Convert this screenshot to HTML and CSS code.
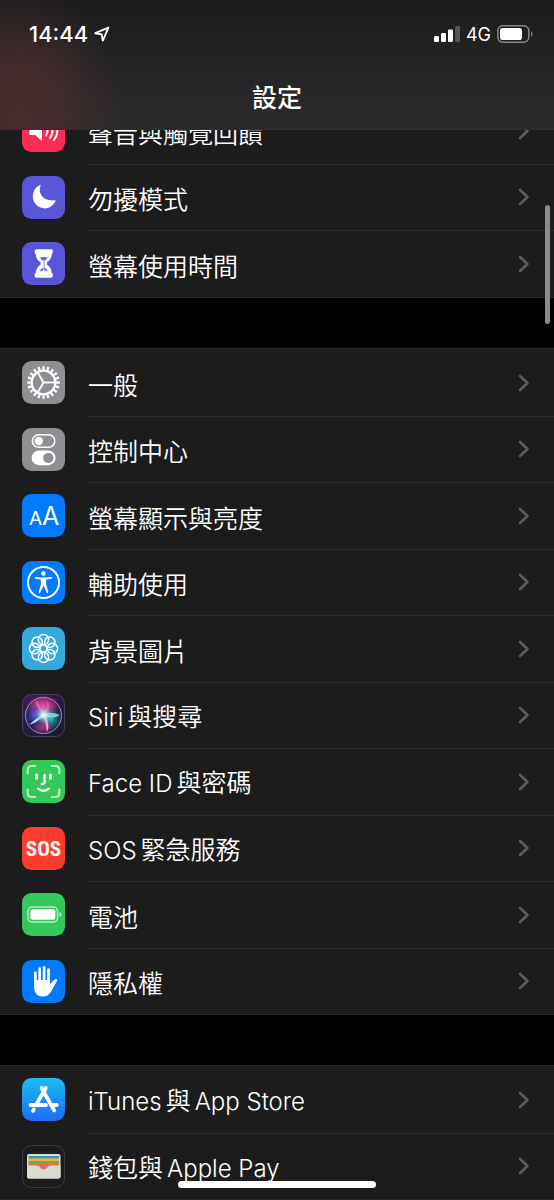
FILE: index.html
```html
<!DOCTYPE html>
<html lang="zh-Hant">
<head>
<meta charset="utf-8">
<meta name="viewport" content="width=device-width, initial-scale=1">
<title>設定</title>
<link rel="stylesheet" href="styles.css">
</head>
<body>
<svg class="defs" aria-hidden="true">
  <defs>
    <symbol id="chevron" viewBox="0 0 12 18"><path d="M2 2 L9.5 9 L2 16" fill="none" stroke="currentColor" stroke-width="2.6" stroke-linecap="round" stroke-linejoin="round"/></symbol>
    <linearGradient id="store" x1="0" y1="0" x2="0" y2="1"><stop offset="0" stop-color="#1cbcf7"/><stop offset="1" stop-color="#1d6bf3"/></linearGradient>
    <linearGradient id="siri-bg" x1="0" y1="0" x2="1" y2="1"><stop offset="0" stop-color="#3a1a5c"/><stop offset="1" stop-color="#17182c"/></linearGradient>
    <radialGradient id="siri-glow"><stop offset="0" stop-color="#fff"/><stop offset=".3" stop-color="#c9f4ff" stop-opacity=".8"/><stop offset="1" stop-color="#5ad" stop-opacity="0"/></radialGradient>
    <radialGradient id="siri-pink"><stop offset="0" stop-color="#f0489c"/><stop offset=".5" stop-color="#d8388f" stop-opacity=".8"/><stop offset="1" stop-color="#c02a86" stop-opacity="0"/></radialGradient>
    <radialGradient id="siri-teal"><stop offset="0" stop-color="#24c4b4"/><stop offset="1" stop-color="#12787c" stop-opacity="0"/></radialGradient>
    <radialGradient id="siri-blue"><stop offset="0" stop-color="#5a55e0"/><stop offset="1" stop-color="#3030a0" stop-opacity="0"/></radialGradient>
  </defs>
</svg>

<header class="topbar">
  <div class="status">
    <div class="status-side">
      <time class="clock">14:44</time>
      <svg class="locate" viewBox="0 0 16 16" role="img" aria-label="定位"><path d="M1.3 7.2 L14.4 1.6 L8.8 14.6 L7.7 8.4 Z" fill="none" stroke="#fff" stroke-width="1.9" stroke-linejoin="round"/></svg>
    </div>
    <div class="status-side">
      <svg class="signal" viewBox="0 0 26 17" role="img" aria-label="訊號"><g fill="#fff"><rect x="0" y="10" width="5" height="6" rx="1.3"/><rect x="7" y="7" width="5" height="9" rx="1.3"/><rect x="14" y="3.500" width="5" height="12.500" rx="1.3"/></g><rect x="21" y="0" width="5" height="16" rx="1.3" fill="#555557"/></svg>
      <span class="network">4G</span>
      <svg class="battery" viewBox="0 0 36 18" role="img" aria-label="電池"><rect x=".8" y=".8" width="31" height="16.400" rx="5" fill="none" stroke="#858587" stroke-width="1.5"/><rect x="3" y="3" width="22" height="12" rx="2.800" fill="#fff"/><path d="M34 6.300 a3.200 3.200 0 0 1 0 5.400z" fill="#858587"/></svg>
    </div>
  </div>
  <h1 class="title">設定</h1>
</header>

<main class="settings">
  <ul class="group">
    <li class="row"><a href="#sound">
      <svg class="icon" viewBox="0 0 43 43"><rect width="43" height="43" rx="9.500" fill="#ff2d55"/><path d="M7.500 18 h5.500 l6-6 q1-.8 1 .6 v18 q0 1.400-1 .6 l-6-5.200 h-5.500z" fill="#fff"/><g fill="none" stroke="#fff" stroke-width="1.900" stroke-linecap="round"><path d="M24 17 q3 4.500 0 9.500"/><path d="M28 14 q5 7.500 0 15"/><path d="M32 11.500 q7 10 0 19.500"/></g></svg>
      <span class="label">聲音與觸覺回饋</span><svg class="chevron"><use href="#chevron"/></svg></a></li>
    <li class="row"><a href="#dnd">
      <svg class="icon" viewBox="0 0 43 43"><rect width="43" height="43" rx="9.500" fill="#5856d6"/><path d="M18.500 9.400 C16 16 20 25.500 32.500 24.300 Q34.200 24 33.400 25.500 C29.500 32.800 21 34.500 15 29.600 C8.500 24 9.800 13 17.400 9.200 Q19 8.400 18.500 9.400z" fill="#fff"/></svg>
      <span class="label">勿擾模式</span><svg class="chevron"><use href="#chevron"/></svg></a></li>
    <li class="row"><a href="#screentime">
      <svg class="icon" viewBox="0 0 43 43"><rect width="43" height="43" rx="9.500" fill="#5856d6"/><path d="M14.500 7.300 h14.500 q1.800 0 1.800 1.800 v1.200 q0 1.500-1 1.700 q-.3 5.500-4.800 8.300 v2.400 q4.500 2.800 4.800 8.300 q1 .2 1 1.700 v1.200 q0 1.800-1.800 1.800 h-14.500 q-1.800 0-1.800-1.800 v-1.200 q0-1.500 1-1.700 q.3-5.500 4.800-8.300 v-2.400 q-4.500-2.800-4.800-8.300 q-1-.2-1-1.700 v-1.200 q0-1.800 1.800-1.800z" fill="#fff"/><path d="M18 15.300 h7.600 q-1.200 2.500-3 3.700 v6.500 q2.400 1.800 3.200 4 l-4-1.200 l-4 1.200 q.8-2.200 3.200-4 v-6.500 q-1.800-1.200-3-3.700z" fill="#5856d6"/><path d="M21.800 17.500 v13" stroke="#fff" stroke-width="1"/></svg>
      <span class="label">螢幕使用時間</span><svg class="chevron"><use href="#chevron"/></svg></a></li>
  </ul>

  <ul class="group">
    <li class="row"><a href="#general">
      <svg class="icon" viewBox="0 0 43 43"><rect width="43" height="43" rx="9.500" fill="#8e8e93"/><g fill="none" stroke="#fff"><circle cx="21.500" cy="21.500" r="14.400" stroke-width="3.800" pathLength="80" stroke-dasharray="2 2" stroke-dashoffset="1"/><circle cx="21.500" cy="21.500" r="11.800" stroke-width="2.300"/><g stroke-width="1.900"><path d="M21.500 21.500 H33"/><path d="M21.500 21.500 L15.700 11.500"/><path d="M21.500 21.500 L15.700 31.500"/></g></g></svg>
      <span class="label">一般</span><svg class="chevron"><use href="#chevron"/></svg></a></li>
    <li class="row"><a href="#control">
      <svg class="icon" viewBox="0 0 43 43"><rect width="43" height="43" rx="9.500" fill="#8e8e93"/><rect x="10.400" y="6.700" width="22.400" height="12.600" rx="6.300" fill="none" stroke="#fff" stroke-width="1.600"/><circle cx="16.800" cy="13" r="4.200" fill="#fff"/><rect x="9.600" y="22.600" width="24" height="14.600" rx="7.300" fill="#fff"/><circle cx="26.300" cy="29.900" r="5.200" fill="#8e8e93"/></svg>
      <span class="label">控制中心</span><svg class="chevron"><use href="#chevron"/></svg></a></li>
    <li class="row"><a href="#display">
      <svg class="icon" viewBox="0 0 43 43"><rect width="43" height="43" rx="9.500" fill="#007aff"/><g fill="#fff" class="letters"><text x="7" y="31" font-size="19">A</text><text x="20" y="31" font-size="25">A</text></g></svg>
      <span class="label">螢幕顯示與亮度</span><svg class="chevron"><use href="#chevron"/></svg></a></li>
    <li class="row"><a href="#accessibility">
      <svg class="icon" viewBox="0 0 43 43"><rect width="43" height="43" rx="9.500" fill="#007aff"/><circle cx="21.500" cy="21.500" r="15.500" fill="none" stroke="#fff" stroke-width="1.900"/><circle cx="21.500" cy="12.500" r="2.300" fill="#fff"/><path d="M13.600 16.900 L19 17.500 H24 L29.400 16.900" fill="none" stroke="#fff" stroke-width="1.900" stroke-linecap="round"/><path d="M18.800 17 h5.400 v6.500 l2.100 7.600 q.1 1.300-1.300 1 l-3.500-7.600 l-3.500 7.600 q-1.400.3-1.300-1 l2.100-7.600z" fill="#fff"/></svg>
      <span class="label">輔助使用</span><svg class="chevron"><use href="#chevron"/></svg></a></li>
    <li class="row"><a href="#wallpaper">
      <svg class="icon" viewBox="0 0 43 43"><rect width="43" height="43" rx="9.500" fill="#34aadc"/><g fill="none" stroke="#fff" stroke-width="1.500"><circle cx="21.500" cy="12.600" r="5.200"/><circle cx="27.800" cy="15.200" r="5.200"/><circle cx="30.400" cy="21.500" r="5.200"/><circle cx="27.800" cy="27.800" r="5.200"/><circle cx="21.500" cy="30.400" r="5.200"/><circle cx="15.200" cy="27.800" r="5.200"/><circle cx="12.600" cy="21.500" r="5.200"/><circle cx="15.200" cy="15.200" r="5.200"/><circle cx="21.500" cy="21.500" r="3.500"/></g></svg>
      <span class="label">背景圖片</span><svg class="chevron"><use href="#chevron"/></svg></a></li>
    <li class="row"><a href="#siri">
      <svg class="icon" viewBox="0 0 43 43"><rect x=".5" y=".5" width="42" height="42" rx="9" fill="url(#siri-bg)" stroke="#46405c"/><circle cx="21.500" cy="21.500" r="18" fill="#1d2148"/><ellipse cx="21" cy="12" rx="17" ry="11" fill="url(#siri-pink)"/><ellipse cx="29" cy="25" rx="11" ry="12" fill="url(#siri-teal)"/><ellipse cx="12" cy="21" rx="10" ry="13" fill="url(#siri-blue)"/><ellipse cx="21" cy="33" rx="11" ry="7" fill="url(#siri-pink)" opacity=".6"/><path d="M22 20 Q12 12 14 6 Q19 14 22 20 Q27 12 25 6 Q30 14 22 20z" fill="#f9a" opacity=".5"/><path d="M22 20 Q14 24 7 31 Q17 28 22 20z" fill="#9ff4ff"/><path d="M21 21 Q24 30 25 38 Q29 29 22 20z" fill="#f3a4d6"/><path d="M21 20 Q29 17 38 21 Q31 26 21 22z" fill="#9ff3e6" opacity=".75"/><circle cx="21.500" cy="21" r="10" fill="url(#siri-glow)"/><circle cx="21.500" cy="21.500" r="18" fill="none" stroke="#a092b8" stroke-width="1"/></svg>
      <span class="label"><span class="lead">Siri</span>與搜尋</span><svg class="chevron"><use href="#chevron"/></svg></a></li>
    <li class="row"><a href="#faceid">
      <svg class="icon" viewBox="0 0 43 43"><rect width="43" height="43" rx="9.500" fill="#34c759"/><g fill="none" stroke-linecap="round"><path d="M5.700 13.500 V10 Q5.700 6 9.700 6 H13.200 M29.800 6 H33.300 Q37.300 6 37.300 10 V13.500 M37.300 29.500 V33 Q37.300 37 33.300 37 H29.800 M13.200 37 H9.700 Q5.700 37 5.700 33 V29.500" stroke="#b5f0bf" stroke-width="2.200"/><path d="M14.500 15 V18.300 M28.500 15 V18.300" stroke="#fff" stroke-width="3"/><path d="M22.600 15 V22 Q22.600 24.200 19.800 24 M16 28.700 Q21.500 33 27 28.700" stroke="#fff" stroke-width="2.300"/></g></svg>
      <span class="label"><span class="lead">Face ID</span>與密碼</span><svg class="chevron"><use href="#chevron"/></svg></a></li>
    <li class="row"><a href="#sos">
      <svg class="icon" viewBox="0 0 43 43"><rect width="43" height="43" rx="9.500" fill="#ff3b30"/><text class="sos" x="21.500" y="29" text-anchor="middle" fill="#fff">SOS</text></svg>
      <span class="label"><span class="lead">SOS</span>緊急服務</span><svg class="chevron"><use href="#chevron"/></svg></a></li>
    <li class="row"><a href="#battery">
      <svg class="icon" viewBox="0 0 43 43"><rect width="43" height="43" rx="9.500" fill="#34c759"/><rect x="6" y="14" width="29.500" height="15" rx="4" fill="none" stroke="#b5f0bf" stroke-width="1.500"/><rect x="8.300" y="16.300" width="25" height="10.400" rx="2" fill="#fff"/><path d="M37.400 19 q2 .8 2 2.500 t-2 2.500z" fill="#b5f0bf"/></svg>
      <span class="label">電池</span><svg class="chevron"><use href="#chevron"/></svg></a></li>
    <li class="row"><a href="#privacy">
      <svg class="icon" viewBox="0 0 43 43"><rect width="43" height="43" rx="9.500" fill="#007aff"/><g stroke="#fff" stroke-width="2.700" stroke-linecap="round" fill="none"><path d="M13.400 26 V12.800"/><path d="M17.700 22 V8.500"/><path d="M22.100 22 V7.300"/><path d="M26.500 23 V9.500"/></g><path d="M12 20 H27.900 V24.500 L31 20.800 Q32.600 18.800 34.600 19.300 Q35.800 19.800 34.800 21.200 L29.500 31 Q26.500 36.600 20.800 36.600 Q12 36.600 12 27z" fill="#fff"/></svg>
      <span class="label">隱私權</span><svg class="chevron"><use href="#chevron"/></svg></a></li>
  </ul>

  <ul class="group">
    <li class="row"><a href="#store-settings">
      <svg class="icon" viewBox="0 0 43 43"><rect width="43" height="43" rx="9.500" fill="url(#store)"/><g fill="none" stroke="#fff" stroke-width="3.800" stroke-linecap="round"><path d="M23.800 10 L14.200 26.600"/><path d="M19.600 10 L32.200 32.400"/><path d="M8.600 27 H24"/><path d="M31 27 H34.800"/><path d="M11.800 31.400 L11 32.800"/></g></svg>
      <span class="label"><span class="lead">iTunes</span>與<span class="trail">App Store</span></span><svg class="chevron"><use href="#chevron"/></svg></a></li>
    <li class="row"><a href="#wallet">
      <svg class="icon" viewBox="0 0 43 43"><rect x=".5" y=".5" width="42" height="42" rx="9" fill="#1c1c1d" stroke="#3c3c3e"/><rect x="5" y="9" width="33.500" height="24.500" rx="2" fill="#dddbd0"/><rect x="6.500" y="11" width="30.500" height="3" fill="#3f95bd"/><rect x="6.500" y="13.400" width="30.500" height="3" fill="#eab73a"/><rect x="6.500" y="16" width="30.500" height="3" fill="#6cab50"/><rect x="6.500" y="18.500" width="30.500" height="3" fill="#ee6a5a"/><path d="M5 20.500 H14.500 Q16.500 20.500 17.500 22 Q21.700 27.500 26 22 Q27 20.500 29 20.500 H38.500 V31.500 Q38.500 33.500 36.500 33.500 H7 Q5 33.500 5 31.500z" fill="#dddbd0"/><path d="M15.500 20.300 Q17 20.500 17.800 22 Q21.700 27.200 25.700 22 Q26.500 20.500 28 20.300z" fill="#ee6a5a"/></svg>
      <span class="label">錢包與<span class="trail">Apple Pay</span></span><svg class="chevron"><use href="#chevron"/></svg></a></li>
  </ul>
</main>

<div class="scroll-thumb"></div>
<div class="home-bar"></div>
</body>
</html>
```

FILE: styles.css
```css
* {
  box-sizing: border-box;
}

body {
  margin: 0;
  min-height: 100vh;
  background: #000;
  color: #fff;
  font-family: Inter, "Noto Sans CJK TC", sans-serif;
}

.defs {
  position: absolute;
  width: 0;
  height: 0;
}

.topbar {
  position: fixed;
  z-index: 2;
  top: 0;
  left: 0;
  right: 0;
  padding: 20px 21px 15px 29px;
  border-bottom: 1px solid #303032;
  background:
    radial-gradient(ellipse 100px 130px at 20px 115px, #482b2c 0%, #482b2cd0 40%, #482b2c50 75%, #482b2c00 100%),
    linear-gradient(#1c1c1c, #29292b 85%);
}

.status,
.status-side {
  display: flex;
  align-items: center;
}

.status {
  justify-content: space-between;
  height: 28px;
}

.status-side {
  gap: 6px;
}

.clock {
  font-size: 22px;
  font-weight: 500;
}

.locate {
  width: 16px;
  height: 16px;
}

.signal {
  width: 26px;
  height: 17px;
}

.network {
  font-size: 18px;
}

.battery {
  width: 36px;
  height: 18px;
}

.title {
  margin: 31px 8px 0 0;
  font-family: "Noto Sans CJK TC", sans-serif;
  font-size: 25px;
  font-weight: 500;
  line-height: 35px;
  text-align: center;
}

.settings {
  display: grid;
  gap: 52px;
  padding-top: 97px;
}

.group {
  margin: 0;
  padding: 0;
  list-style: none;
  background: #1c1c1d;
  box-shadow: 0 -1px #29292a, 0 1px #29292a;
}

.row a {
  display: flex;
  align-items: center;
  height: 66px;
  padding: 0 24px 0 22px;
  color: inherit;
  text-decoration: none;
}

.row:nth-child(odd) a {
  height: 67px;
}

.row + .row {
  background: linear-gradient(#2e2e30, #2e2e30) 88px 0 / 100% 1px no-repeat;
}

.icon {
  flex: none;
  width: 43px;
  height: 43px;
}

.label {
  flex: 1;
  margin-left: 23px;
  padding-top: 2px;
  font-family: "Noto Sans CJK TC", sans-serif;
  font-size: 25px;
  font-weight: 350;
  line-height: 36px;
}

.lead {
  margin-right: 4px;
}

.trail {
  margin-left: 4px;
}

.lead,
.trail {
  font-family: Inter, sans-serif;
  font-size: 24px;
  font-weight: 350;
}

.chevron {
  flex: none;
  width: 12px;
  height: 18px;
  color: #5c5c60;
}

.letters {
  font-family: Inter, sans-serif;
  font-weight: 400;
}

.sos {
  font-family: "Liberation Sans Narrow", "Roboto Condensed", Roboto, sans-serif;
  font-size: 21px;
  font-weight: 700;
}

.scroll-thumb {
  position: fixed;
  z-index: 3;
  top: 205px;
  right: 4px;
  width: 5px;
  height: 119px;
  border-radius: 3px;
  background: #8a8a8b;
}

.home-bar {
  position: fixed;
  z-index: 3;
  bottom: 12px;
  left: 50%;
  width: 198px;
  height: 7px;
  border-radius: 4px;
  background: #fff;
  transform: translateX(-50%);
}
```
